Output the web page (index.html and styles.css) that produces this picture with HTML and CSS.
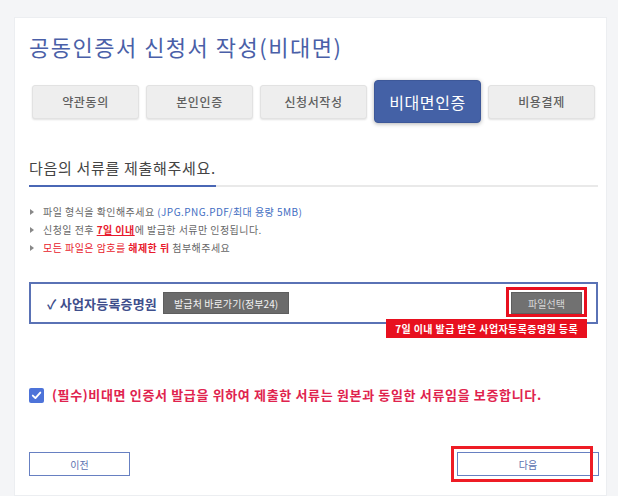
FILE: index.html
```html
<!DOCTYPE html>
<html>
<head>
    <meta charset="utf-8" />
    <title>공동인증서 신청서 작성</title>
    <link rel="stylesheet" href="styles.css">
</head>
<body>
    <div class="card">
        <h1 class="title">공동인증서 신청서 작성(비대면)</h1>
        <ul class="steps">
            <li class="step">약관동의</li>
            <li class="step">본인인증</li>
            <li class="step">신청서작성</li>
            <li class="step active">비대면인증</li>
            <li class="step">비용결제</li>
        </ul>
        <div class="sectionHead">
            <h2>다음의 서류를 제출해주세요.</h2>
        </div>
        <ul class="notes">
            <li>파일 형식을 확인해주세요 <span class="blue">(JPG.PNG.PDF/최대 용량 5MB)</span></li>
            <li>신청일 전후 <span class="red under">7일 이내</span>에 발급한 서류만 인정됩니다.</li>
            <li><span class="red">모든 파일은 암호를 <b>해제한 뒤</b></span> 첨부해주세요</li>
        </ul>
        <div class="docBox">
            <div class="docLeft">
                <span class="docName">✓ 사업자등록증명원</span>
                <button class="grayBtn">발급처 바로가기(정부24)</button>
            </div>
            <span class="fileWrap">
                <button class="grayBtn fileBtn">파일선택</button>
                <span class="fileTip">7일 이내 발급 받은 사업자등록증명원 등록</span>
            </span>
        </div>
        <label class="agree">
            <span class="checkbox">
                <svg width="11" height="11" viewBox="0 0 11 11"><path d="M1.8 5.6 L4.4 8.1 L9.3 2.6" fill="none" stroke="#fff" stroke-width="1.9" stroke-linecap="round" stroke-linejoin="round"/></svg>
            </span>
            (필수)비대면 인증서 발급을 위하여 제출한 서류는 원본과 동일한 서류임을 보증합니다.
        </label>
        <div class="actions">
            <button class="lineBtn prev">이전</button>
            <button class="lineBtn next">다음</button>
        </div>
    </div>
</body>
</html>
```

FILE: styles.css
```css
body {
    font-family: "Noto Sans CJK KR", "Noto Sans", sans-serif;
    margin: 0;
    background-color: #f4f5f7;
    padding: 17px 11px 2px 14px;
}
ul {
    list-style: none;
    margin: 0;
    padding: 0;
}
.card {
    background-color: white;
    border: 1px solid #eceef1;
    padding: 13px 8px 19px 14px;
}
.title {
    margin: 0;
    font-size: 22px;
    line-height: 30px;
    font-weight: 400;
    letter-spacing: 1.5px;
    color: #4a5fa8;
}
.steps {
    display: flex;
    flex-direction: row;
    align-items: center;
    gap: 7px;
    margin: 19px 0 0 3px;
    height: 43px;
}
.step {
    width: 107px;
    height: 34px;
    display: flex;
    align-items: center;
    justify-content: center;
    box-sizing: border-box;
    background-color: #eeeeee;
    border: 1px solid #e2e2e2;
    border-radius: 3px;
    box-shadow: 0 1px 2px rgba(0, 0, 0, 0.12);
    font-size: 12px;
    font-weight: 500;
    letter-spacing: 0.6px;
    color: #5f5f5f;
}
.step.active {
    height: 43px;
    background-color: #4461a6;
    border-color: #3d5899;
    border-radius: 4px;
    box-shadow: 0 1px 4px rgba(0, 0, 0, 0.3);
    font-size: 16px;
    font-weight: 400;
    color: white;
}
.sectionHead {
    margin-top: 32px;
    border-bottom: 2px solid #e9e9e9;
}
.sectionHead h2 {
    display: inline-block;
    margin: 0 0 -2px 0;
    padding-bottom: 6px;
    font-size: 15px;
    line-height: 22px;
    font-weight: 400;
    letter-spacing: 0.7px;
    color: #444;
    border-bottom: 2px solid #4a67b5;
}
.notes {
    margin-top: 16px;
}
.notes li {
    position: relative;
    padding-left: 14px;
    font-size: 10px;
    line-height: 18px;
    letter-spacing: 0.45px;
    color: #666;
}
.notes li::before {
    content: "";
    position: absolute;
    left: 1px;
    top: 6px;
    border-left: 4px solid #888;
    border-top: 3px solid transparent;
    border-bottom: 3px solid transparent;
}
.blue {
    color: #3f6dc2;
}
.red {
    color: #e8192c;
}
.under {
    text-decoration: underline;
    font-weight: 700;
}
.docBox {
    margin-top: 25px;
    border: 2px solid #5a72b5;
    padding: 8px 14px 8px 16px;
    display: flex;
    flex-direction: row;
    justify-content: space-between;
    align-items: center;
}
.docLeft {
    display: flex;
    flex-direction: row;
    align-items: center;
    gap: 6px;
}
.docName {
    font-size: 13px;
    font-weight: 700;
    letter-spacing: 0.2px;
    color: #3f4f8c;
}
.grayBtn {
    font-family: inherit;
    height: 22px;
    padding: 0 10px;
    border: 1px solid #5e5e5e;
    background-color: #6b6b6b;
    color: #f2f2f2;
    font-size: 10px;
    letter-spacing: 0.1px;
}
.fileWrap {
    position: relative;
    display: flex;
}
.fileWrap::after {
    content: "";
    position: absolute;
    left: -5px;
    right: -5px;
    top: -5px;
    bottom: -3px;
    border: 3px solid #e8101f;
}
.fileBtn {
    width: 71px;
    padding: 0;
    background-color: #717171;
    color: #d8d8d8;
}
.fileTip {
    position: absolute;
    right: -5px;
    top: 27px;
    z-index: 1;
    white-space: nowrap;
    height: 19px;
    line-height: 19px;
    padding: 0 9px;
    background-color: #e8101f;
    color: white;
    font-size: 10px;
    font-weight: 700;
    letter-spacing: 0.4px;
}
.agree {
    margin-top: 61px;
    display: flex;
    flex-direction: row;
    align-items: center;
    gap: 8px;
    font-size: 13px;
    line-height: 20px;
    font-weight: 700;
    letter-spacing: 0.65px;
    color: #e0234e;
}
.checkbox {
    width: 15px;
    height: 15px;
    border-radius: 2px;
    background-color: #4d73d9;
    display: flex;
    align-items: center;
    justify-content: center;
}
.actions {
    margin-top: 47px;
    display: flex;
    flex-direction: row;
    justify-content: space-between;
}
.lineBtn {
    font-family: inherit;
    height: 24px;
    border: 1px solid #6780c2;
    background-color: white;
    color: #5d72b0;
    font-size: 10px;
}
.prev {
    width: 101px;
}
.next {
    position: relative;
    width: 142px;
    margin-right: -1px;
}
.next::after {
    content: "";
    position: absolute;
    left: -7px;
    right: 5px;
    top: -7px;
    bottom: -7px;
    border: 3px solid #ee1c25;
}
```
